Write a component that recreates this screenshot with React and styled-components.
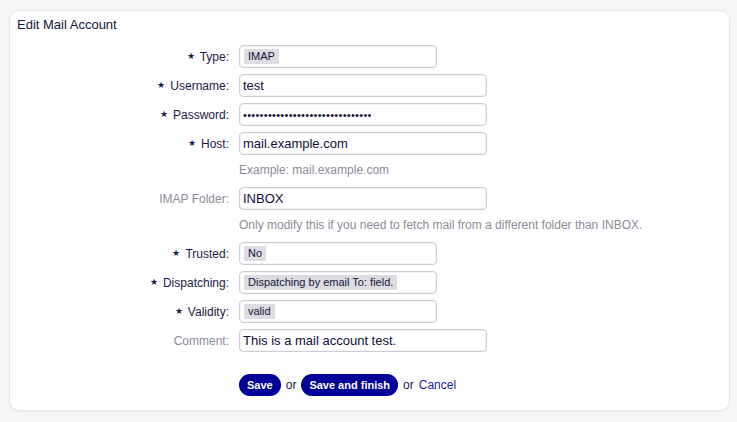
import React from "react";
import styled, { createGlobalStyle } from "styled-components";

const Global = createGlobalStyle`
  html, body { margin: 0; padding: 0; background: #f5f6f8; }
  body { font-family: "Liberation Sans", Arial, sans-serif; }
  * { box-sizing: border-box; }
`;

const Page = styled.div`
  padding: 10px 7px 9px 9px;
  min-height: 422px;
`;

const Card = styled.div`
  background: #fff;
  border: 1px solid #e4e5ea;
  border-radius: 10px;
  box-shadow: 0 1px 2px rgba(0, 0, 0, 0.05);
  padding: 6px 0 14px 0;
`;

const Title = styled.h2`
  margin: 0 0 0 7px;
  font-size: 13px;
  font-weight: normal;
  color: #14143c;
  line-height: 16px;
`;

const Form = styled.div`
  display: grid;
  grid-template-columns: 219px 1fr;
  column-gap: 10px;
  row-gap: 6px;
  margin-top: 12px;
  align-items: center;
`;

const Label = styled.label`
  display: flex;
  align-items: center;
  justify-content: flex-end;
  height: 23px;
  font-size: 12px;
  color: ${(p) => (p.$muted ? "#8b8b98" : "#1a1a48")};
  white-space: nowrap;
`;

const Star = styled.span`
  font-size: 9px;
  line-height: 1;
  margin-right: 5px;
`;

const Control = styled.div`
  display: flex;
  align-items: center;
  height: 23px;
`;

const TextInput = styled.input`
  display: block;
  width: 248px;
  height: 23px;
  border: 1px solid #cdcdd3;
  border-radius: 4px;
  padding: 0 3px;
  font-family: "Liberation Sans", Arial, sans-serif;
  font-size: 13px;
  color: #0d0d38;
  background: #fff;
  outline: none;
  box-shadow: inset 0 0 0 1px #f2f2f5;
  &[type="password"] {
    font-size: 11px;
    letter-spacing: 0.3px;
  }
`;

const Select = styled.div`
  min-width: 198px;
  width: max-content;
  height: 23px;
  border: 1px solid #cdcdd3;
  border-radius: 4px;
  padding: 0 4px;
  display: flex;
  align-items: center;
  background: #fff;
  box-shadow: inset 0 0 0 1px #f2f2f5;
`;

const Chip = styled.span`
  background: #dcdce1;
  color: #14143c;
  font-size: 11px;
  line-height: 15px;
  padding: 0 4px;
`;

const Hint = styled.div`
  grid-column: 2;
  font-size: 12px;
  color: #8b8b98;
  line-height: 18px;
  padding-bottom: 2px;
`;

const Actions = styled.div`
  grid-column: 2;
  display: flex;
  align-items: center;
  gap: 5px;
  margin-top: 16px;
  font-size: 12px;
  color: #1a1a48;
`;

const Button = styled.button`
  height: 22px;
  border: none;
  border-radius: 11px;
  background: #000099;
  color: #fff;
  font-family: "Liberation Sans", Arial, sans-serif;
  font-weight: bold;
  font-size: 11px;
  padding: 0 8px;
  cursor: pointer;
`;

const Link = styled.a`
  color: #1a1aa0;
  text-decoration: none;
  font-size: 12px;
`;

const Field = ({ label, required, muted, children }) => (
  <>
    <Label $muted={muted}>
      {required && <Star>★</Star>}
      {label}
    </Label>
    <Control>{children}</Control>
  </>
);

export default function App() {
  return (
    <>
      <Global />
      <Page>
        <Card>
          <Title>Edit Mail Account</Title>
          <Form>
            <Field label="Type:" required>
              <Select><Chip>IMAP</Chip></Select>
            </Field>
            <Field label="Username:" required>
              <TextInput readOnly value="test" />
            </Field>
            <Field label="Password:" required>
              <TextInput readOnly type="password" value="xxxxxxxxxxxxxxxxxxxxxxxxxxxxxxx" />
            </Field>
            <Field label="Host:" required>
              <TextInput readOnly value="mail.example.com" />
            </Field>
            <Hint>Example: mail.example.com</Hint>
            <Field label="IMAP Folder:" muted>
              <TextInput readOnly value="INBOX" />
            </Field>
            <Hint>Only modify this if you need to fetch mail from a different folder than INBOX.</Hint>
            <Field label="Trusted:" required>
              <Select><Chip>No</Chip></Select>
            </Field>
            <Field label="Dispatching:" required>
              <Select><Chip>Dispatching by email To: field.</Chip></Select>
            </Field>
            <Field label="Validity:" required>
              <Select><Chip>valid</Chip></Select>
            </Field>
            <Field label="Comment:" muted>
              <TextInput readOnly value="This is a mail account test." />
            </Field>
            <Actions>
              <Button>Save</Button>
              <span>or</span>
              <Button>Save and finish</Button>
              <span>or</span>
              <Link href="#">Cancel</Link>
            </Actions>
          </Form>
        </Card>
      </Page>
    </>
  );
}
